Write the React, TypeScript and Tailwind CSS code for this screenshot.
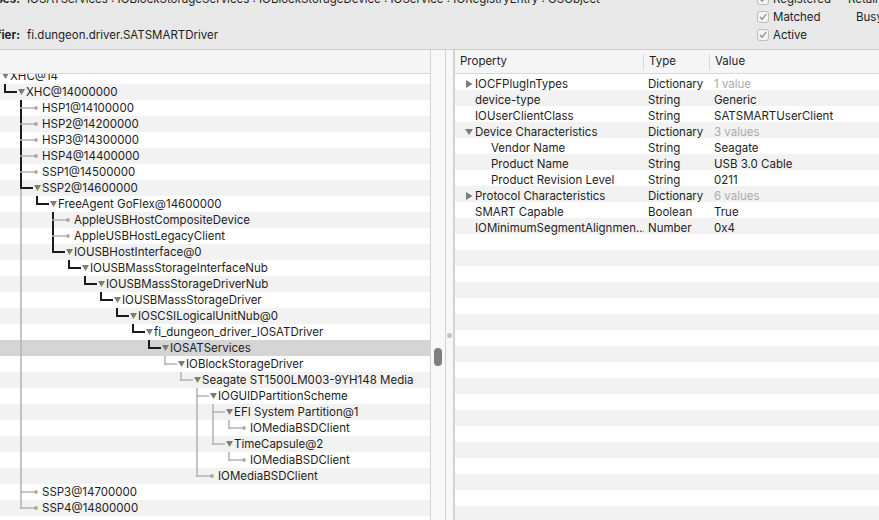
type Node = { name: string; sel?: boolean; children?: Node[] };
type Guide = { x: number; dark: boolean };
type Elbow = { topDark: boolean; bottom: boolean; bottomDark: boolean; dark: boolean };
type Row = { node: Node; level: number; guides: Guide[]; elbow?: Elbow };

const n = (name: string, ...children: Node[]): Node => ({ name, children: children.length ? children : undefined });

const selected: Node = { name: "IOSATServices", sel: true, children: [
  n("IOBlockStorageDriver",
    n("Seagate ST1500LM003-9YH148 Media",
      n("IOGUIDPartitionScheme",
        n("EFI System Partition@1", n("IOMediaBSDClient")),
        n("TimeCapsule@2", n("IOMediaBSDClient"))),
      n("IOMediaBSDClient"))),
] };

const tree: Node = n("XHC@14",
  n("XHC@14000000",
    n("HSP1@14100000"),
    n("HSP2@14200000"),
    n("HSP3@14300000"),
    n("HSP4@14400000"),
    n("SSP1@14500000"),
    n("SSP2@14600000",
      n("FreeAgent GoFlex@14600000",
        n("AppleUSBHostCompositeDevice"),
        n("AppleUSBHostLegacyClient"),
        n("IOUSBHostInterface@0",
          n("IOUSBMassStorageInterfaceNub",
            n("IOUSBMassStorageDriverNub",
              n("IOUSBMassStorageDriver",
                n("IOSCSILogicalUnitNub@0",
                  n("fi_dungeon_driver_IOSATDriver", selected)))))))),
    n("SSP3@14700000"),
    n("SSP4@14800000")));

const onPath = (node: Node): boolean => !!node.sel || (node.children ?? []).some(onPath);

// walk the tree, remembering which ancestor guide lines run through each row
function flatten(node: Node, level: number, guides: Guide[], out: Row[], elbow?: Elbow, cont?: Guide) {
  out.push({ node, level, guides, elbow });
  const kids = node.children ?? [];
  const pathIdx = onPath(node) ? kids.findIndex(onPath) : -1;
  const base = cont ? [...guides, cont] : guides;
  kids.forEach((kid, i) => {
    const more = i < kids.length - 1;
    flatten(kid, level + 1, base, out,
      { topDark: i <= pathIdx, bottom: more, bottomDark: i < pathIdx, dark: onPath(kid) },
      more ? { x: 16 * (level + 1) - 11, dark: i < pathIdx } : undefined);
  });
}

const rows: Row[] = [];
flatten(tree, 0, [], rows);

const DARK = "#1b1b1b";
const LIGHT = "#b2b2b2";

function TreeRow({ row, index }: { row: Row; index: number }) {
  const { level, guides, elbow, node } = row;
  const leaf = !node.children;
  const ex = 16 * level - 11;
  const w = 16 * level + 10;
  const bg = node.sel ? "bg-[#d5d5d5]" : index % 2 ? "bg-[#f2f2f2]" : "bg-white";
  return (
    <div className={`h-[16px] flex items-center ${bg}`}>
      <svg width={w} height={16} className="shrink-0">
        {guides.map((g, i) => (
          <line key={i} x1={g.x} y1={0} x2={g.x} y2={16} stroke={g.dark ? DARK : LIGHT} strokeWidth={g.dark ? 2 : 1.5} />
        ))}
        {elbow && (
          <>
            {elbow.bottom && (
              <line x1={ex} y1={8} x2={ex} y2={16} stroke={elbow.bottomDark ? DARK : LIGHT} strokeWidth={elbow.bottomDark ? 2 : 1.5} />
            )}
            <line x1={ex} y1={0} x2={ex} y2={9} stroke={elbow.topDark ? DARK : LIGHT} strokeWidth={elbow.topDark ? 2 : 1.5} />
            <line x1={ex - 1} y1={8} x2={16 * level + (leaf ? 3 : 1)} y2={8} stroke={elbow.dark ? DARK : LIGHT} strokeWidth={elbow.dark ? 2 : 1.5} />
          </>
        )}
        {leaf ? (
          <circle cx={16 * level + 4} cy={8} r={1.9} fill="#a9a9a9" />
        ) : (
          <polygon points={`${16 * level + 2},5 ${16 * level + 9},5 ${16 * level + 5.5},11`} fill="#7b7b7b" />
        )}
      </svg>
      <span className="pt-[2px] whitespace-nowrap text-[#1d1d1d]">{node.name}</span>
    </div>
  );
}

type Prop = { name: string; type: string; value: string; dim?: boolean; disc?: "open" | "closed"; child?: boolean };

const props: Prop[] = [
  { name: "IOCFPlugInTypes", type: "Dictionary", value: "1 value", dim: true, disc: "closed" },
  { name: "device-type", type: "String", value: "Generic" },
  { name: "IOUserClientClass", type: "String", value: "SATSMARTUserClient" },
  { name: "Device Characteristics", type: "Dictionary", value: "3 values", dim: true, disc: "open" },
  { name: "Vendor Name", type: "String", value: "Seagate", child: true },
  { name: "Product Name", type: "String", value: "USB 3.0 Cable", child: true },
  { name: "Product Revision Level", type: "String", value: "0211", child: true },
  { name: "Protocol Characteristics", type: "Dictionary", value: "6 values", dim: true, disc: "closed" },
  { name: "SMART Capable", type: "Boolean", value: "True" },
  { name: "IOMinimumSegmentAlignmen...", type: "Number", value: "0x4" },
];

function Disclosure({ open }: { open: boolean }) {
  return (
    <svg width={8} height={16} className="shrink-0 mr-[2px]">
      {open ? <polygon points="0,5 8,5 4,11" fill="#7b7b7b" /> : <polygon points="1,4 7.5,8 1,12" fill="#7b7b7b" />}
    </svg>
  );
}

function PropRow({ p, index }: { p?: Prop; index: number }) {
  return (
    <div className={`h-[16px] grid grid-cols-[189px_66px_1fr] items-center ${index % 2 ? "bg-[#f2f2f2]" : "bg-white"}`}>
      {p ? (
        <>
          <div className={`flex items-center whitespace-nowrap overflow-hidden ${p.child ? "pl-[36px]" : p.disc ? "pl-[10px]" : "pl-[20px]"}`}>
            {p.disc && <Disclosure open={p.disc === "open"} />}
            <span className="pt-[2px]">{p.name}</span>
          </div>
          <div className="pl-[4px] pt-[2px]">{p.type}</div>
          <div className={`pl-[4px] pt-[2px] ${p.dim ? "text-[#ababab]" : ""}`}>{p.value}</div>
        </>
      ) : null}
    </div>
  );
}

function Check({ label }: { label: string }) {
  return (
    <div className="h-[18px] flex items-center gap-[4px]">
      <span className="w-[12px] h-[12px] rounded-[3px] border border-[#bcbcbc] bg-[#f4f4f4] flex items-center justify-center">
        <svg width={10} height={10} viewBox="0 0 10 10">
          <path d="M2.3 5.3 L4.2 7.2 L7.8 2.6" fill="none" stroke="#8c8c8c" strokeWidth={1.3} strokeLinecap="round" strokeLinejoin="round" />
        </svg>
      </span>
      <span className="pt-[1px]">{label}</span>
    </div>
  );
}

function InfoRow({ label, value }: { label: string; value: string }) {
  return (
    <div className="h-[18px] flex items-center pt-[1px]">
      <div className="w-[20px] flex justify-end whitespace-nowrap font-bold">{label}</div>
      <div className="pl-[7px] whitespace-nowrap">{value}</div>
    </div>
  );
}

export default function App() {
  return (
    <div className="w-[879px] h-[520px] overflow-hidden bg-[#e8e8e8] font-['Inter',sans-serif] text-[11.5px] text-[#1e1e1e] flex flex-col">
      <div className="h-[50px] shrink-0 border-b border-[#cecece] flex overflow-hidden">
        <div className="-mt-[10px] flex flex-col">
          <InfoRow label="Classes:" value="IOSATServices : IOBlockStorageServices : IOBlockStorageDevice : IOService : IORegistryEntry : OSObject" />
          <InfoRow label="" value="" />
          <InfoRow label="Bundle Identifier:" value="fi.dungeon.driver.SATSMARTDriver" />
        </div>
        <div className="ml-auto w-[122px] shrink-0 -mt-[10px] flex">
          <div className="w-[91px] shrink-0 flex flex-col">
            <Check label="Registered" />
            <Check label="Matched" />
            <Check label="Active" />
          </div>
          <div className="flex flex-col whitespace-nowrap">
            <div className="h-[18px] flex items-center pt-[1px]">Retain Count: 9</div>
            <div className="h-[18px] flex items-center pt-[1px] pl-[8px]">Busy: 0</div>
          </div>
        </div>
      </div>

      <div className="flex-1 flex min-h-0">
        <div className="w-[430px] shrink-0 flex flex-col bg-white">
          <div className="h-[24px] shrink-0 bg-[#f5f5f5] border-b border-[#d9d9d9]" />
          <div className="flex-1 overflow-hidden">
            <div className="-mt-[6px]">
              {rows.map((r, i) => (
                <TreeRow key={i} row={r} index={i} />
              ))}
              <div className="h-[16px] bg-white" />
            </div>
          </div>
        </div>
        <div className="w-[15px] shrink-0 border-l border-[#d3d3d3] bg-[#f8f8f8] flex flex-col">
          <div className="mt-[298px] mx-auto w-[8px] h-[18px] rounded-full bg-[#7f7f7f]" />
        </div>
        <div className="w-[10px] shrink-0 border-l border-r-2 border-[#d2d2d2] bg-[#f7f7f7] flex flex-col items-center">
          <div className="mt-[283px] w-[5px] h-[5px] rounded-full bg-[#c2c2c2]" />
        </div>
        <div className="flex-1 flex flex-col bg-white min-w-0">
          <div className="h-[24px] shrink-0 bg-[#f5f5f5] border-b border-[#d9d9d9] grid grid-cols-[189px_66px_1fr] items-center">
            <div className="pl-[5px] pt-[1px] border-r border-[#d8d8d8] h-[16px] flex items-center">Property</div>
            <div className="pl-[5px] pt-[1px] border-r border-[#d8d8d8] h-[16px] flex items-center">Type</div>
            <div className="pl-[5px] pt-[1px]">Value</div>
          </div>
          <div className="flex-1 overflow-hidden">
            {Array.from({ length: 28 }, (_, i) => (
              <PropRow key={i} p={props[i]} index={i} />
            ))}
          </div>
        </div>
      </div>
    </div>
  );
}
